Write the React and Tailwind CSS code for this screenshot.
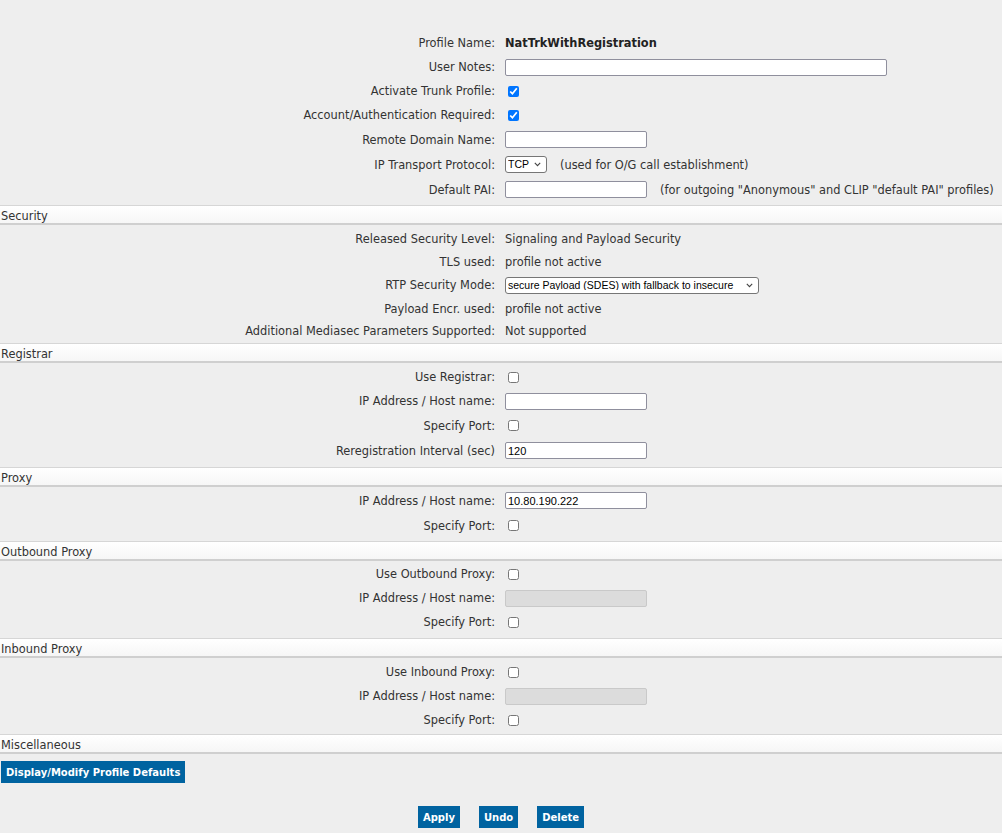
import React from 'react';

const Label = ({ children }) => (
  <div className="text-right text-[#333] whitespace-nowrap pt-[2px]">{children}</div>
);

const Row = ({ label, h = 'h-[24px]', children }) => (
  <div className={`grid grid-cols-[495px_1fr] gap-x-[10px] items-center ${h}`}>
    <Label>{label}</Label>
    <div className="flex items-center text-[#333] whitespace-nowrap">{children}</div>
  </div>
);

const Value = ({ children, className = '' }) => (
  <span className={`pt-[2px] ${className}`}>{children}</span>
);

const TextInput = ({ wide, value = '', disabled }) => (
  <input
    type="text"
    defaultValue={value}
    disabled={disabled}
    className={`h-[17px] rounded-[2px] border px-[2px] text-[11px] text-black font-['Liberation_Sans',sans-serif] ${
      wide ? 'w-[382px]' : 'w-[142px]'
    } ${disabled ? 'bg-[#dcdcdc] border-[#c9c9c9]' : 'bg-white border-[#8f8f9d]'}`}
  />
);

const Check = ({ checked }) => (
  <input
    type="checkbox"
    defaultChecked={checked}
    className="w-[11px] h-[11px] ml-[3px] m-0 accent-[#0075ff]"
  />
);

const Select = ({ width, options }) => (
  <span className="relative inline-flex">
    <select
      className={`appearance-none h-[17px] ${width} border border-[#767676] rounded-[3px] bg-white text-[10.5px] text-black font-['Liberation_Sans',sans-serif] pl-[2px] pr-[16px]`}
    >
      {options.map((o) => (
        <option key={o}>{o}</option>
      ))}
    </select>
    <svg
      className="absolute right-[6px] top-[6px] pointer-events-none"
      width="7"
      height="5"
      viewBox="0 0 7 5"
      fill="none"
    >
      <path d="M0.8 0.8 L3.5 3.6 L6.2 0.8" stroke="#444" strokeWidth="1.1" />
    </svg>
  </span>
);

const Header = ({ title }) => (
  <div className="h-[20px] border-t border-t-[#d6d6d6] border-b-2 border-b-[#cfcfcf] bg-gradient-to-b from-white to-[#f6f6f6] flex items-center pt-[4px] pl-[1px] text-[#333]">
    {title}
  </div>
);

const BlueButton = ({ children, className = '' }) => (
  <button className={`bg-[#0063a0] text-white font-bold text-[10px] h-[22px] px-[5px] pt-[1px] ${className}`}>
    {children}
  </button>
);

export default function App() {
  return (
    <div className="min-h-screen bg-[#eeeeee] font-['DejaVu_Sans',Verdana,sans-serif] text-[11.4px] leading-none pt-[31px]">
      <div className="pb-[3px]">
        <Row label="Profile Name:">
          <Value className="font-bold text-[#222]">NatTrkWithRegistration</Value>
        </Row>
        <Row label="User Notes:">
          <TextInput wide />
        </Row>
        <Row label="Activate Trunk Profile:">
          <Check checked />
        </Row>
        <Row label="Account/Authentication Required:">
          <Check checked />
        </Row>
        <Row label="Remote Domain Name:" h="h-[25px]">
          <TextInput />
        </Row>
        <Row label="IP Transport Protocol:" h="h-[25px]">
          <Select width="w-[42px]" options={['TCP', 'UDP', 'TLS']} />
          <Value className="ml-[13px]">(used for O/G call establishment)</Value>
        </Row>
        <Row label="Default PAI:" h="h-[25px]">
          <TextInput />
          <Value className="ml-[13px]">(for outgoing "Anonymous" and CLIP "default PAI" profiles)</Value>
        </Row>
      </div>

      <Header title="Security" />
      <div className="pt-[3px] pb-[1px]">
        <Row label="Released Security Level:" h="h-[22px]">
          <Value>Signaling and Payload Security</Value>
        </Row>
        <Row label="TLS used:" h="h-[23px]">
          <Value>profile not active</Value>
        </Row>
        <Row label="RTP Security Mode:" h="h-[24px]">
          <Select width="w-[254px]" options={['secure Payload (SDES) with fallback to insecure']} />
        </Row>
        <Row label="Payload Encr. used:" h="h-[23px]">
          <Value>profile not active</Value>
        </Row>
        <Row label="Additional Mediasec Parameters Supported:" h="h-[22px]">
          <Value>Not supported</Value>
        </Row>
      </div>

      <Header title="Registrar" />
      <div className="pt-[2px] pb-[4px]">
        <Row label="Use Registrar:">
          <Check />
        </Row>
        <Row label="IP Address / Host name:">
          <TextInput />
        </Row>
        <Row label="Specify Port:" h="h-[25px]">
          <Check />
        </Row>
        <Row label="Reregistration Interval (sec)" h="h-[25px]">
          <TextInput value="120" />
        </Row>
      </div>

      <Header title="Proxy" />
      <div className="pt-[1px] pb-[3px]">
        <Row label="IP Address / Host name:" h="h-[25px]">
          <TextInput value="10.80.190.222" />
        </Row>
        <Row label="Specify Port:" h="h-[25px]">
          <Check />
        </Row>
      </div>

      <Header title="Outbound Proxy" />
      <div className="pt-[1px] pb-[4px]">
        <Row label="Use Outbound Proxy:">
          <Check />
        </Row>
        <Row label="IP Address / Host name:">
          <TextInput disabled />
        </Row>
        <Row label="Specify Port:">
          <Check />
        </Row>
      </div>

      <Header title="Inbound Proxy" />
      <div className="pt-[2px] pb-[2px]">
        <Row label="Use Inbound Proxy:">
          <Check />
        </Row>
        <Row label="IP Address / Host name:">
          <TextInput disabled />
        </Row>
        <Row label="Specify Port:">
          <Check />
        </Row>
      </div>

      <Header title="Miscellaneous" />
      <div className="pt-[7px] pl-[1px]">
        <BlueButton>Display/Modify Profile Defaults</BlueButton>
      </div>

      <div className="flex justify-center gap-[19px] pt-[23px] pb-[6px]">
        <BlueButton>Apply</BlueButton>
        <BlueButton>Undo</BlueButton>
        <BlueButton>Delete</BlueButton>
      </div>
    </div>
  );
}
